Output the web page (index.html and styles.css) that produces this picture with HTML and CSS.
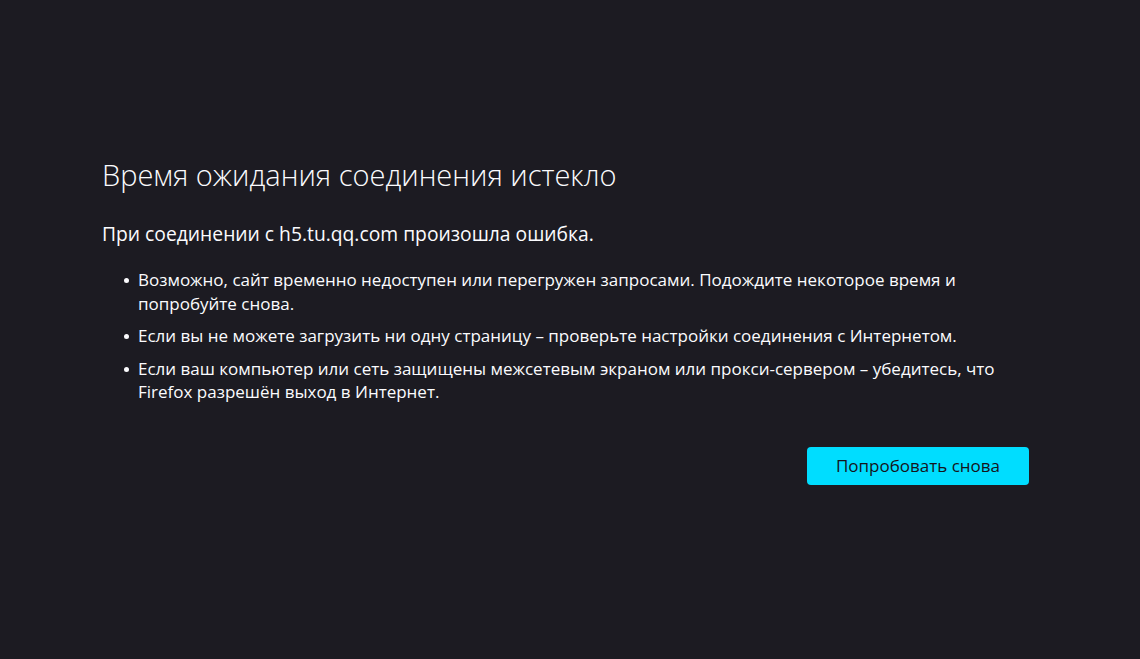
FILE: index.html
```html
<!DOCTYPE html>
<html lang="ru">
<head>
<meta charset="utf-8">
<title>Время ожидания соединения истекло</title>
<link rel="stylesheet" href="styles.css">
</head>
<body>
<main class="container">
  <h1 class="title">Время ожидания соединения истекло</h1>
  <p class="short-desc">При соединении с h5.tu.qq.com произошла ошибка.</p>
  <ul class="long-desc">
    <li>Возможно, сайт временно недоступен или перегружен запросами. Подождите некоторое время и попробуйте снова.</li>
    <li>Если вы не можете загрузить ни одну страницу – проверьте настройки соединения с Интернетом.</li>
    <li>Если ваш компьютер или сеть защищены межсетевым экраном или прокси-сервером – убедитесь, что Firefox разрешён выход в Интернет.</li>
  </ul>
  <div class="actions">
    <button class="try-again">Попробовать снова</button>
  </div>
</main>
</body>
</html>
```

FILE: styles.css
```css
html, body {
  margin: 0;
  padding: 0;
  height: 100%;
}
body {
  background: #1c1b22;
  color: #fbfbfe;
  font-family: "Open Sans", "Noto Sans", sans-serif;
  font-size: 17px;
}
.container {
  box-sizing: border-box;
  width: 927px;
  margin-left: 102px;
  padding-top: 153px;
}
.title {
  margin: 0;
  font-size: 29px;
  font-weight: 300;
  line-height: 44px;
}
.short-desc {
  margin: 24px 0 0;
  font-size: 19.3px;
  line-height: 26px;
}
.long-desc {
  margin: 21px 0 0;
  padding-left: 36px;
  list-style: none;
}
.long-desc li {
  position: relative;
  font-size: 17px;
  line-height: 23.5px;
  margin-bottom: 9px;
}
.long-desc li::before {
  content: "";
  position: absolute;
  left: -14px;
  top: 10px;
  width: 5px;
  height: 5px;
  border-radius: 50%;
  background: #fbfbfe;
}
.actions {
  display: flex;
  justify-content: flex-end;
  margin-top: 43px;
}
.try-again {
  width: 222px;
  height: 38px;
  border: none;
  border-radius: 4px;
  background: #00ddff;
  color: #15141a;
  font-family: inherit;
  font-size: 17px;
  padding: 0;
}
```
